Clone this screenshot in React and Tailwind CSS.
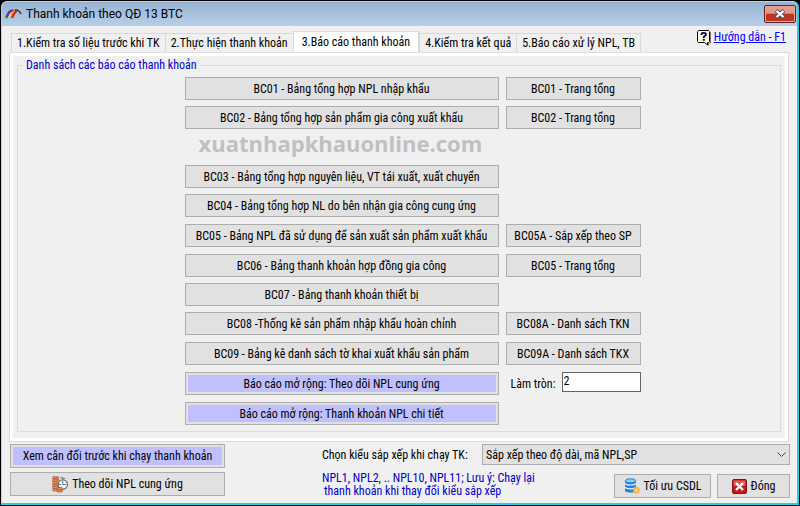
import React from "react";

const reports = [
  { main: "BC01 - Bảng tổng hợp NPL nhập khẩu", side: "BC01 - Trang tổng" },
  { main: "BC02 - Bảng tổng hợp sản phẩm gia công xuất khẩu", side: "BC02 - Trang tổng" },
  { watermark: "xuatnhapkhauonline.com" },
  { main: "BC03 - Bảng tổng hợp nguyên liệu, VT tái xuất, xuất chuyển" },
  { main: "BC04 - Bảng tổng hợp NL do bên nhận gia công cung ứng" },
  { main: "BC05 - Bảng NPL đã sử dụng để sản xuất sản phẩm xuất khẩu", side: "BC05A - Sắp xếp theo SP" },
  { main: "BC06 - Bảng thanh khoản hợp đồng gia công", side: "BC05 - Trang tổng" },
  { main: "BC07 - Bảng thanh khoản thiết bị" },
  { main: "BC08 -Thống kê sản phẩm nhập khẩu hoàn chỉnh", side: "BC08A - Danh sách TKN" },
  { main: "BC09 - Bảng kê danh sách tờ khai xuất khẩu sản phẩm", side: "BC09A - Danh sách TKX" },
  { main: "Báo cáo mở rộng: Theo dõi NPL cung ứng", accent: true, rounding: true },
  { main: "Báo cáo mở rộng: Thanh khoản NPL chi tiết", accent: true },
];

function Button({ accent, className = "", children }) {
  const tone = accent ? "bg-[#c0c0ff] shadow-[inset_0_0_0_2px_#e1e1e1]" : "bg-[#e1e1e1]";
  return (
    <button type="button" className={`flex items-center justify-center whitespace-nowrap border border-[#adadad] ${tone} ${className}`}>
      {children}
    </button>
  );
}

function Tab({ active, children }) {
  return (
    <button
      type="button"
      role="tab"
      aria-selected={!!active}
      className={
        active
          ? "flex h-[21px] items-center whitespace-nowrap border border-b-0 border-[#d9d9d9] bg-white px-2"
          : "-mr-px flex h-[19px] items-center whitespace-nowrap border border-b-0 border-[#d9d9d9] bg-[#f0f0f0] px-[5px]"
      }
    >
      {children}
    </button>
  );
}

function RainbowIcon() {
  return (
    <svg width="17" height="12" viewBox="0 0 17 12" fill="none" strokeWidth="1.4">
      <path d="M1 9C3 4 5 2 8 2" stroke="#7a1fa0" />
      <path d="M2.3 9.5C4 5 6 3 9 2.6" stroke="#1d2fd0" />
      <path d="M3.8 9.5C5 6 7 4 9 3.8" stroke="#f4e61c" />
      <path d="M6 10C7 6 8.500 2 11 2.200" stroke="#f08a1c" />
      <path d="M7.300 10C8.500 6 10 3.500 12 3.200" stroke="#e01818" strokeWidth="2" />
      <path d="M10 2C13 1.200 14.500 3 16 6" stroke="#26262e" />
      <path d="M0.500 8.500 2 10.500" stroke="#18a058" />
    </svg>
  );
}

function HelpIcon() {
  return (
    <svg width="14" height="16" viewBox="0 0 14 16">
      <path d="M1.500.5h10l1 1v10l-1 1H10.500v2.500L7.500 12.500h-6l-1-1v-10z" fill="#fffde0" stroke="#000" />
      <path d="M13.500 2v11h-2v2.500" fill="none" stroke="#777" />
      <path d="M4.500 5V4q0-1.200 2.200-1.200T9 4.200q0 1-1.200 1.700T6.700 8" fill="none" stroke="#000060" strokeWidth="1.800" />
      <path d="M5.800 9h2v1.800h-2z" fill="#000060" />
    </svg>
  );
}

function CoinsIcon() {
  return (
    <svg width="16" height="17" viewBox="0 0 16 17">
      <g fill="#e39a55" stroke="#a9492d" strokeWidth=".7">
        {[2, 4.4, 6.8, 9.2, 11.6, 14].map((y) => (
          <rect key={y} x=".6" y={y - 1.3} width="6" height="2.200" rx=".8" />
        ))}
      </g>
      <circle cx="10.800" cy="8.500" r="4.600" fill="#f3f5f7" stroke="#66747f" strokeWidth="1.300" />
      <path d="M8.500 1.500l4.500 1M10.800 2v2M10.800 5v3.500H14M6 8.500h3" fill="none" stroke="#66747f" />
      <g fill="#e39a55" stroke="#a9492d" strokeWidth=".7">
        <rect x="5" y="11.500" width="5.500" height="2.100" rx=".8" />
        <rect x="5" y="13.800" width="5.500" height="2.100" rx=".8" />
      </g>
    </svg>
  );
}

function DatabaseIcon() {
  return (
    <svg width="16" height="16" viewBox="0 0 16 16">
      <path d="M1 3v9.500c0 2.700 11 2.700 11 0V3z" fill="#1b86dc" />
      <path d="M1 5.200c1 2.400 10 2.400 11 0M1 9c1 2.400 10 2.400 11 0" fill="none" stroke="#e8f2fa" strokeWidth="1.200" />
      <ellipse cx="6.500" cy="2.800" rx="5.300" ry="2" fill="#8fcbf5" stroke="#1b86dc" />
      <circle cx="12.300" cy="12.300" r="2.500" fill="#fbe2b4" stroke="#f0ad45" strokeWidth="1.600" />
      <circle cx="12.300" cy="12.300" r=".8" fill="#f0ad45" />
    </svg>
  );
}

function CloseBoxIcon() {
  return (
    <svg width="15" height="15" viewBox="0 0 15 15">
      <rect x=".5" y=".5" width="14" height="14" rx="1.500" fill="#c9191b" stroke="#7c1416" />
      <path d="M1.500 1.500h12v5q-6 2-12 0z" fill="#e0595a" />
      <path d="M4 4l7 7M11 4l-7 7" stroke="#fff" strokeWidth="2.200" />
    </svg>
  );
}

export default function App() {
  return (
    <div className="flex min-h-screen flex-col bg-black font-['Roboto_Condensed','Roboto','Noto_Sans',sans-serif] text-xs leading-[14px] text-black">
      <div className="mx-px mb-px mt-px flex flex-1 flex-col overflow-hidden rounded-t-md border border-b-2 border-r-2 border-[#b9d1ea] border-b-[#26cbe8] border-r-[#26cbe8] bg-[#f0f0f0]">
        <header className="flex h-6 items-center bg-linear-to-b from-[#98b3d1] to-[#b7d0e9] pl-[3px] pr-px">
          <RainbowIcon />
          <h1 className="ml-1 flex-1 font-['Roboto','Noto_Sans',sans-serif]">Thanh khoản theo QĐ 13 BTC</h1>
          <button
            type="button"
            aria-label="Đóng cửa sổ"
            className="flex h-[18px] w-8 items-center justify-center rounded-[2px] border border-[#5e2028] bg-linear-to-b from-[#e19a8e] from-45% to-[#bd3520] to-50% shadow-[inset_0_0_0_1px_#e8a79b]"
          >
            <svg width="12" height="10" viewBox="0 0 12 10">
              <path d="M2 1.500l8 7M10 1.500l-8 7" stroke="#535666" strokeWidth="4" />
              <path d="M2.500 2l7 6M9.500 2l-7 6" stroke="#fff" strokeWidth="2.200" />
            </svg>
          </button>
        </header>

        <main className="flex flex-1 flex-col px-[7px] pt-1">
          <div className="flex items-start justify-between">
            <div role="tablist" className="flex items-end pl-[2px] pt-px">
              <Tab>1.Kiểm tra số liệu trước khi TK</Tab>
              <Tab>2.Thực hiện thanh khoản</Tab>
              <Tab active>3.Báo cáo thanh khoản</Tab>
              <Tab>4.Kiểm tra kết quả</Tab>
              <Tab>5.Báo cáo xử lý NPL, TB</Tab>
            </div>
            <a href="#help" className="flex items-start gap-[3px] whitespace-nowrap pr-1 text-[#0000ff]">
              <HelpIcon />
              <span className="underline">Hướng dẫn - F1</span>
            </a>
          </div>

          <section role="tabpanel" className="mr-px border border-[#dcdcdc] bg-white p-[3px]">
            <div className="bg-[#f0f0f0] px-1 pb-[6px] pt-[2px]">
              <fieldset className="border border-[#dcdcdc] pb-[6px]">
                <legend className="ml-[5px] px-[3px] text-[#0000c8]">Danh sách các báo cáo thanh khoản</legend>
                <div className="grid grid-cols-[314px_135px] grid-rows-[29px_29px_30px_29px_30px_30px_29px_29px_30px_30px_30px_23px] items-start justify-center gap-x-[7px] pl-[27px] pt-[5px]">
                  {reports.map((r, i) => (
                    <React.Fragment key={i}>
                      {r.watermark ? (
                        <p className="pl-[14px] font-['Open_Sans'] text-[22px] font-bold leading-4 text-[#c0c0c0]">{r.watermark}</p>
                      ) : (
                        <Button accent={r.accent} className="h-[23px]">{r.main}</Button>
                      )}
                      {r.rounding ? (
                        <div className="flex h-5 items-start justify-between">
                          <label htmlFor="rounding" className="pl-[5px] pt-[5px]">Làm tròn:</label>
                          <input id="rounding" defaultValue="2" className="h-5 w-[79px] border border-[#646464] bg-white px-px pb-[2px]" />
                        </div>
                      ) : r.side ? (
                        <Button className="h-[23px]">{r.side}</Button>
                      ) : (
                        <span />
                      )}
                    </React.Fragment>
                  ))}
                </div>
              </fieldset>
            </div>
          </section>

          <footer className="flex items-start justify-between pl-px pt-[2px]">
            <div className="flex w-[215px] flex-col gap-1">
              <Button accent className="h-6">Xem cân đối trước khi chạy thanh khoản</Button>
              <Button className="h-6 gap-1">
                <CoinsIcon />
                Theo dõi NPL cung ứng
              </Button>
            </div>
            <div className="flex w-[468px] flex-col">
              <div className="flex items-center justify-between">
                <label htmlFor="sort" className="whitespace-nowrap">Chọn kiểu sắp xếp khi chạy TK:</label>
                <div className="relative w-[308px]">
                  <select id="sort" className="block h-[21px] w-full appearance-none border border-[#adadad] bg-[#e1e1e1] pl-[3px] pr-5">
                    <option>Sắp xếp theo độ dài, mã NPL,SP</option>
                  </select>
                  <svg className="pointer-events-none absolute right-1 top-[7px]" width="9" height="7" viewBox="0 0 9 7">
                    <path d="M.5 1.500l4 4 4-4" fill="none" stroke="#444" />
                  </svg>
                </div>
              </div>
              <div className="flex items-start justify-between pt-[6px]">
                <p className="whitespace-nowrap pt-px leading-[13px] text-[#0000c8]">
                  NPL1, NPL2, .. NPL10, NPL11; Lưu ý: Chạy lại
                  <br />
                  <span className="pl-[2px]">thanh khoản khi thay đổi kiểu sắp xếp</span>
                </p>
                <div className="flex gap-[6px] pt-[3px]">
                  <Button className="h-6 w-[97px] gap-1">
                    <DatabaseIcon />
                    Tối ưu CSDL
                  </Button>
                  <Button className="h-6 w-[73px] gap-1">
                    <CloseBoxIcon />
                    Đóng
                  </Button>
                </div>
              </div>
            </div>
          </footer>
        </main>
      </div>
    </div>
  );
}
